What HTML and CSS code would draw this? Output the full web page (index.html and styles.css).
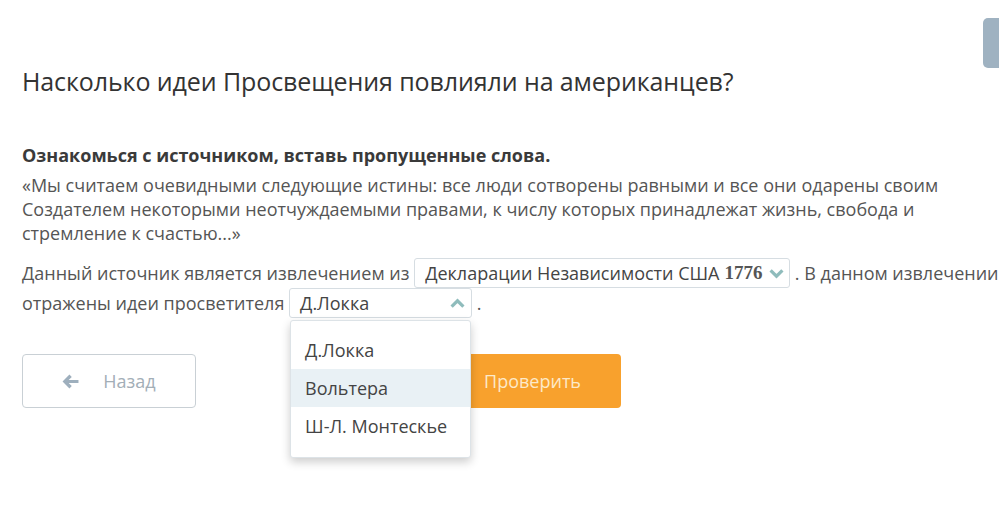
FILE: index.html
```html
<!DOCTYPE html>
<html lang="ru">
<head>
<meta charset="utf-8">
<link rel="stylesheet" href="styles.css">
</head>
<body>
<div class="side-tab"></div>
<main class="page">
  <h1 class="title">Насколько идеи Просвещения повлияли на американцев?</h1>
  <p class="task">Ознакомься с источником, вставь пропущенные слова.</p>
  <p class="quote">«Мы считаем очевидными следующие истины: все люди сотворены равными и все они одарены своим Создателем некоторыми неотчуждаемыми правами, к числу которых принадлежат жизнь, свобода и стремление к счастью...»</p>
  <div class="fill">
    <span>Данный источник является извлечением из</span>
    <span class="select sel-1">Декларации Независимости США <span class="num">1776</span>
      <svg class="chev" viewBox="0 0 14 10" width="15" height="11"><path d="M1.5 2 L7 7.5 L12.5 2" fill="none" stroke="#8fbcbc" stroke-width="3"/></svg>
    </span>
    <span>. В данном извлечении</span>
    <br>
    <span>отражены идеи просветителя</span>
    <span class="select-wrap">
      <span class="select sel-2">Д.Локка
        <svg class="chev" viewBox="0 0 14 10" width="15" height="11"><path d="M1.5 8 L7 2.5 L12.5 8" fill="none" stroke="#8fbcbc" stroke-width="3"/></svg>
      </span>
      <ul class="menu">
        <li>Д.Локка</li>
        <li class="active">Вольтера</li>
        <li>Ш-Л. Монтескье</li>
      </ul>
    </span>
    <span>.</span>
  </div>
  <div class="actions">
    <button class="btn btn-back">
      <svg viewBox="0 0 16 14" width="17" height="15"><path d="M7 0.5 L9.2 2.7 L6.3 5.5 H15.5 V8.5 H6.3 L9.2 11.3 L7 13.5 L0.5 7 Z" fill="#9eafbd"/></svg>
      <span>Назад</span>
    </button>
    <button class="btn btn-check">Проверить</button>
  </div>
</main>
</body>
</html>
```
FILE: styles.css
```css
html, body {
  margin: 0;
  padding: 0;
  background: #fff;
}
body {
  font-family: "Open Sans", "Noto Sans", sans-serif;
  color: #555;
  width: 999px;
  height: 511px;
  overflow: hidden;
  position: relative;
}
.side-tab {
  position: absolute;
  right: -8px;
  top: 18px;
  width: 24px;
  height: 50px;
  background: #9fb2c1;
  border-radius: 5px;
}
.page {
  padding: 63px 0 0 22px;
}
.title {
  margin: 0;
  font-size: 25px;
  font-weight: 400;
  line-height: 36px;
  color: #333;
  letter-spacing: -0.1px;
}
.task {
  margin: 44px 0 0;
  font-size: 18px;
  font-weight: 700;
  color: #3a3a3a;
  line-height: 24px;
}
.quote {
  margin: 6px 0 0;
  font-size: 18px;
  line-height: 24px;
  width: 965px;
}
.fill {
  margin-top: 13px;
  font-size: 18px;
  line-height: 30px;
}
.select {
  display: inline-flex;
  align-items: center;
  box-sizing: border-box;
  height: 30px;
  border: 1px solid #d6dde2;
  border-radius: 3px;
  padding: 0 5px 0 10px;
  line-height: 28px;
  color: #444;
  vertical-align: baseline;
}
.num {
  font-family: "Liberation Serif", serif;
  font-weight: 700;
  font-size: 19px;
  margin-left: 5px;
  color: #555;
}
.sel-1 {
  width: 376px;
}
.sel-1 .chev {
  margin-left: auto;
}
.select-wrap {
  position: relative;
  display: inline-block;
  line-height: 28px;
}
.sel-2 {
  width: 183px;
  justify-content: space-between;
  padding-right: 6px;
}
.menu {
  position: absolute;
  left: 1px;
  top: 32px;
  width: 181px;
  box-sizing: border-box;
  margin: 0;
  padding: 10px 0 12px;
  list-style: none;
  background: #fff;
  border: 1px solid #dde3e7;
  border-radius: 3px;
  box-shadow: 0 4px 10px rgba(0, 0, 0, 0.2);
  z-index: 5;
  color: #444;
  line-height: 38px;
  font-size: 18px;
}
.menu li {
  padding: 0 14px;
  height: 38px;
}
.menu li.active {
  background: #e9f1f5;
}
.actions {
  display: flex;
  margin-top: 36px;
  gap: 252px;
}
.btn {
  box-sizing: border-box;
  height: 54px;
  border-radius: 4px;
  font-family: "Open Sans", sans-serif;
  font-size: 18px;
  display: flex;
  align-items: center;
  justify-content: center;
}
.btn-back {
  width: 174px;
  background: #fff;
  border: 1px solid #c9d0d5;
  color: #a3aeb7;
  gap: 24px;
}
.btn-check {
  width: 173px;
  background: #f8a12d;
  border: none;
  color: #fde9c8;
  padding-left: 2px;
}
```
